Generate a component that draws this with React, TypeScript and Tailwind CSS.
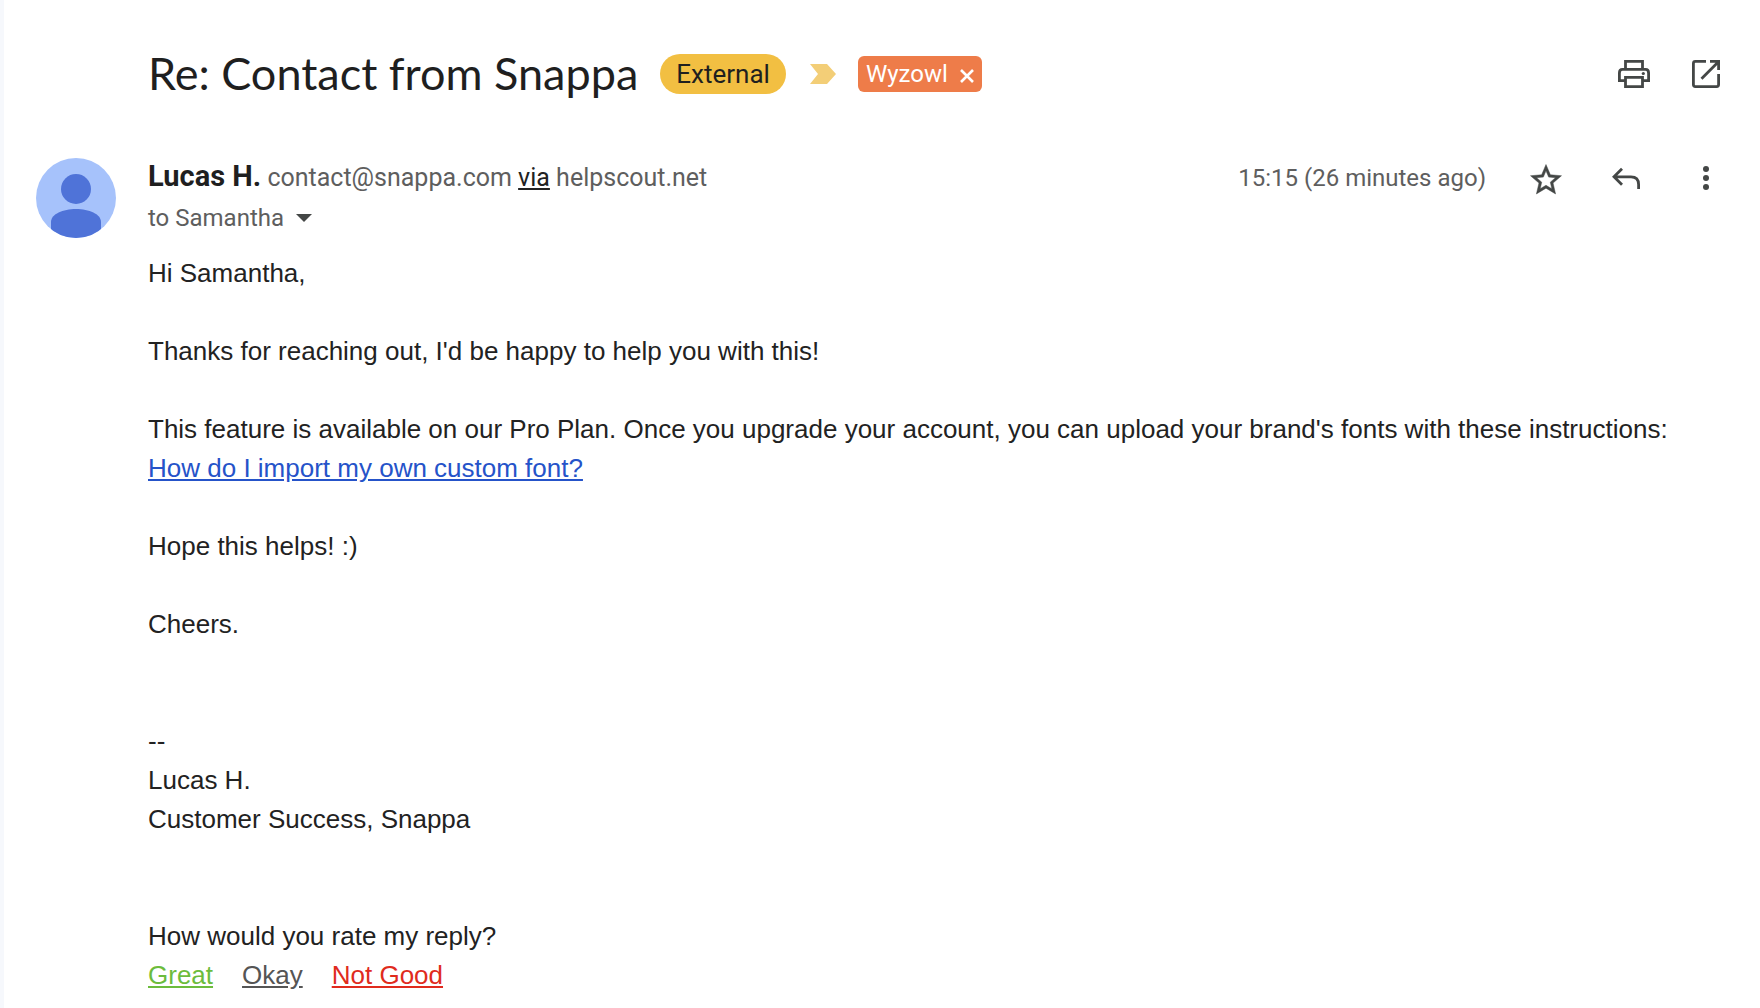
import type { ReactNode } from "react";

const ratings = [
    {
        name: "Great",
        color: "text-[#6cbc3c]",
    },
    {
        name: "Okay",
        color: "text-[#555555]",
    },
    {
        name: "Not Good",
        color: "text-[#e02b1d]",
    },
];

const IconButton = ({ label, children }: { label: string; children: ReactNode }) => (
    <button
        type="button"
        aria-label={label}
        className="flex size-10 shrink-0 items-center justify-center rounded-full hover:bg-gray-100"
    >
        <svg width="40" height="40" viewBox="0 0 40 40" fill="none" stroke="#444746" strokeWidth="2.8">
            {children}
        </svg>
    </button>
);

const Subject = () => (
    <header className="flex h-10 items-center justify-between">
        <div className="flex items-center">
            <h1 className="pb-0.5 font-[Lato,sans-serif] text-[45px] leading-10 whitespace-nowrap">
                Re: Contact from Snappa
            </h1>
            <span className="ml-[22px] flex h-10 items-center rounded-full bg-[#f2bf42] px-4 text-[26px]">
                External
            </span>
            <svg className="ml-6" width="26" height="20" viewBox="0 0 26 20" fill="#f3ce77">
                <path d="M0 0H17L26 10L17 20H0L8 10Z" />
            </svg>
            <span className="ml-[22px] flex h-9 items-center gap-3 rounded-md bg-[#ee7c49] px-2 text-2xl text-white">
                Wyzowl
                <button type="button" aria-label="Remove label Wyzowl" className="pt-1">
                    <svg width="14" height="14" viewBox="0 0 14 14" stroke="currentColor" strokeWidth="2.6">
                        <path d="M1 1L13 13M13 1L1 13" />
                    </svg>
                </button>
            </span>
        </div>
        <div className="flex gap-8">
            <IconButton label="Print all">
                <path d="M11.5 15V7.4H28.5V15" />
                <path d="M11 26.6H5.4V19Q5.4 15.4 8.5 15.4H31.5Q34.6 15.4 34.6 19V26.6H29" />
                <path d="M11.5 23.4H28.5V32.6H11.5Z" />
                <circle cx="29.3" cy="19.5" r="1.6" fill="#444746" stroke="none" />
            </IconButton>
            <IconButton label="In new window">
                <path d="M20 7.4H9.4Q7.4 7.4 7.4 9.4V30.6Q7.4 32.6 9.4 32.6H30.6Q32.6 32.6 32.6 30.6V20" />
                <path d="M24 7.4H32.6V16M32.2 8L15.5 24.7" />
            </IconButton>
        </div>
    </header>
);

const Sender = () => (
    <div className="flex items-start justify-between">
        <div className="text-2xl leading-10 text-[#5e5e5e]">
            <p className="h-10 text-[25px] leading-10 whitespace-nowrap">
                <span className="text-[29px] leading-none font-bold text-[#1f1f1f]">Lucas H.</span>{" "}
                contact@snappa.com{" "}
                <a href="#" className="text-[#222222] underline">
                    via
                </a>{" "}
                helpscout.net
            </p>
            <button type="button" className="flex items-center gap-3">
                to Samantha
                <svg width="16" height="8" viewBox="0 0 16 8" fill="#444746">
                    <path d="M0 0H16L8 8Z" />
                </svg>
            </button>
        </div>
        <div className="flex items-center gap-10 text-[#5e5e5e]">
            <time className="text-2xl leading-10 whitespace-nowrap">15:15 (26 minutes ago)</time>
            <IconButton label="Star">
                <path
                    d="M22 9.24l-7.19-.62L12 2 9.19 8.63 2 9.24l5.46 4.73L5.82 21 12 17.27 18.18 21l-1.63-7.03L22 9.24zM12 15.4l-3.76 2.27 1-4.28-3.32-2.88 4.38-.38L12 6.1l1.71 4.04 4.38.38-3.32 2.88 1 4.28L12 15.4z"
                    transform="translate(1.4 3.4) scale(1.55)"
                    fill="#444746"
                    stroke="#444746"
                    strokeWidth="0.3"
                />
            </IconButton>
            <IconButton label="Reply">
                <path d="M16 10.8L8 18.8L16 26.8M8 18.8H25Q32.6 18.8 32.6 26.5V31" />
            </IconButton>
            <IconButton label="More">
                <g fill="#444746" stroke="none">
                    <circle cx="20" cy="11" r="3" />
                    <circle cx="20" cy="20" r="3" />
                    <circle cx="20" cy="29" r="3" />
                </g>
            </IconButton>
        </div>
    </div>
);

const Avatar = () => (
    <svg className="shrink-0" width="80" height="80" viewBox="0 0 80 80">
        <defs>
            <clipPath id="avatar">
                <circle cx="40" cy="40" r="40" />
            </clipPath>
        </defs>
        <g clipPath="url(#avatar)">
            <rect width="80" height="80" fill="#a6c2fb" />
            <circle cx="40" cy="31" r="15" fill="#4f73d8" />
            <path d="M15 80V64C15 56 27 51 40 51S65 56 65 64V80Z" fill="#4f73d8" />
        </g>
    </svg>
);

const Message = () => (
    <section className="flex flex-col gap-[39px] font-['Liberation_Sans',Arial,sans-serif] text-[26px] leading-[39px] text-[#222222]">
        <p>Hi Samantha,</p>
        <p>Thanks for reaching out, I'd be happy to help you with this!</p>
        <p>
            This feature is available on our Pro Plan. Once you upgrade your account, you can upload
            your brand's fonts with these instructions:
            <br />
            <a href="#" className="text-[#2553c9] underline">
                How do I import my own custom font?
            </a>
        </p>
        <p>Hope this helps! :)</p>
        <p>Cheers.</p>
        <p className="mt-[39px]">
            --
            <br />
            Lucas H.
            <br />
            Customer Success, Snappa
        </p>
        <div className="mt-[39px]">
            <p>How would you rate my reply?</p>
            <ul className="flex gap-[29px]">
                {ratings.map(({ name, color }) => (
                    <li key={name}>
                        <a href="#" className={`underline ${color}`}>
                            {name}
                        </a>
                    </li>
                ))}
            </ul>
        </div>
    </section>
);

export default function App() {
    return (
        <main className="min-h-screen border-l-4 border-[#f6f8fc] bg-white pt-[54px] pr-[34px] pl-8 font-[Roboto,sans-serif] text-[#1f1f1f]">
            <div className="pl-28">
                <Subject />
            </div>
            <div className="mt-16 flex gap-8">
                <Avatar />
                <div className="min-w-0 flex-1">
                    <Sender />
                    <div className="mt-4">
                        <Message />
                    </div>
                </div>
            </div>
        </main>
    );
}
